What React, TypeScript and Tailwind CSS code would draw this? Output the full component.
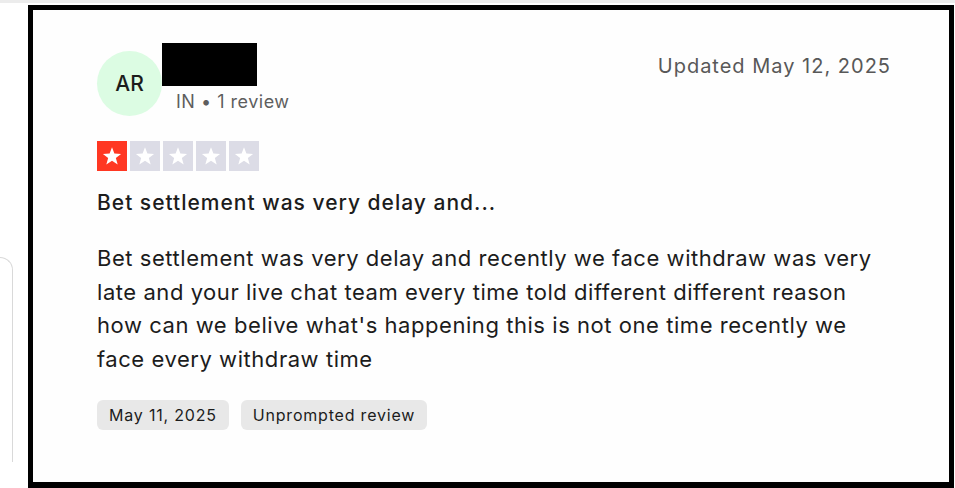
import React from "react";

function Star({ filled }: { filled: boolean }) {
  return (
    <div className={`flex h-[30px] w-[30px] items-center justify-center ${filled ? "bg-[#ff3722]" : "bg-[#dcdce6]"}`}>
      <svg viewBox="0 0 24 24" className="h-[22px] w-[22px]" fill="#ffffff">
        <path d="M12 2.5l2.6 6.9 7.3.3-5.7 4.6 2 7.1L12 17.3l-6.2 4.1 2-7.1-5.7-4.6 7.3-.3z" />
      </svg>
    </div>
  );
}

export default function App() {
  const rating = 1;

  return (
    <div className="relative h-[488px] w-[955px] overflow-hidden bg-white font-['Inter',sans-serif]">
      <div className="h-[3px] w-full bg-[#ececec]" />
      <div className="flex">
        {/* card peeking in from the left */}
        <div className="w-[28px] shrink-0 pt-[254px]">
          <div className="h-[205px] w-[13px] rounded-tr-[14px] border-r border-t border-[#d9d9d9]" />
        </div>

        <div className="mt-[2px] h-[483px] w-[926px] border-[5px] border-b-[6px] border-black bg-[#fefefe] pl-[64px] pr-[58px] pt-[33px]">
          {/* Header */}
          <div className="flex items-start justify-between">
            <div className="flex">
              <div className="mt-[8px] flex h-[65px] w-[65px] items-center justify-center rounded-full bg-[#dcfce3] text-[21px] font-medium text-[#1c1c1c]">
                AR
              </div>
              <div className="ml-[14px] flex flex-col">
                <div className="-ml-[14px] h-[43px] w-[95px] bg-black" />
                <span className="mt-[2px] text-[18px] leading-[28px] tracking-[0.5px] text-[#5e5e5e]">
                  IN • 1 review
                </span>
              </div>
            </div>
            <span className="mt-[10px] text-[20px] leading-[26px] tracking-[1px] text-[#585858]">
              Updated May 12, 2025
            </span>
          </div>

          {/* Stars */}
          <div className="mt-[25px] flex gap-[3px]">
            {[1, 2, 3, 4, 5].map((i) => (
              <Star key={i} filled={i <= rating} />
            ))}
          </div>

          {/* Title */}
          <h2 className="mt-[18px] text-[21px] font-medium leading-[28px] tracking-[1px] text-[#1c1c1c]">
            Bet settlement was very delay and...
          </h2>

          {/* Body */}
          <p className="mt-[25px] text-[22px] leading-[33.5px] tracking-[0.55px] text-[#1c1c1c]">
            Bet settlement was very delay and recently we face withdraw was very late and your live chat team every
            time told different different reason how can we belive what's happening this is not one time recently we
            face every withdraw time
          </p>

          {/* Tags */}
          <div className="mt-[24px] flex gap-[12px]">
            <span className="flex h-[30px] items-center rounded-[6px] bg-[#e8e8e8] px-[12px] text-[16px] tracking-[0.8px] text-[#1c1c1c]">
              May 11, 2025
            </span>
            <span className="flex h-[30px] items-center rounded-[6px] bg-[#e8e8e8] px-[12px] text-[16px] tracking-[0.8px] text-[#1c1c1c]">
              Unprompted review
            </span>
          </div>
        </div>
      </div>
    </div>
  );
}
